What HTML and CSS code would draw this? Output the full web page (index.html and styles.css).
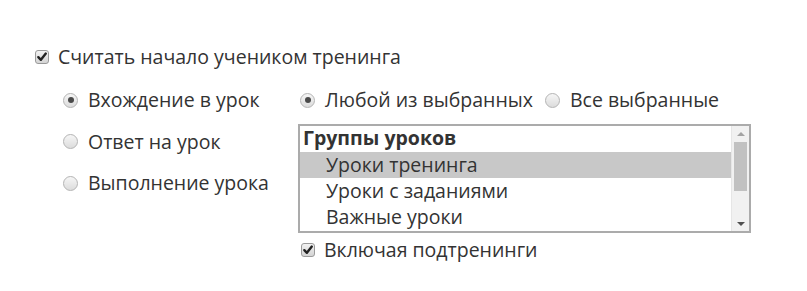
FILE: index.html
```html
<!DOCTYPE html>
<html lang="ru">
<head>
<meta charset="utf-8">
<link rel="stylesheet" href="styles.css">
</head>
<body>
<div class="form">
  <label class="line top-line">
    <span class="cb checked"><svg viewBox="0 0 14 14" width="14" height="14"><path d="M3.3 7.2 L5.9 9.8 L10.8 3.6" fill="none" stroke="#222" stroke-width="2.4" stroke-linecap="round" stroke-linejoin="round"/></svg></span>
    <span class="txt">Считать начало учеником тренинга</span>
  </label>
  <div class="sub">
    <div class="left-col">
      <label class="line"><span class="rb checked"></span><span class="txt">Вхождение в урок</span></label>
      <label class="line"><span class="rb"></span><span class="txt">Ответ на урок</span></label>
      <label class="line"><span class="rb"></span><span class="txt">Выполнение урока</span></label>
    </div>
    <div class="right-col">
      <div class="line mode-row">
        <label class="opt"><span class="rb checked"></span><span class="txt">Любой из выбранных</span></label>
        <label class="opt"><span class="rb"></span><span class="txt">Все выбранные</span></label>
      </div>
      <div class="listbox">
        <div class="items">
          <div class="group">Группы уроков</div>
          <div class="item selected">Уроки тренинга</div>
          <div class="item">Уроки с заданиями</div>
          <div class="item">Важные уроки</div>
        </div>
        <div class="scrollbar">
          <span class="arrow up"></span>
          <span class="thumb"></span>
          <span class="arrow down"></span>
        </div>
      </div>
      <label class="line sub-line">
        <span class="cb checked"><svg viewBox="0 0 14 14" width="14" height="14"><path d="M3.3 7.2 L5.9 9.8 L10.8 3.6" fill="none" stroke="#222" stroke-width="2.4" stroke-linecap="round" stroke-linejoin="round"/></svg></span>
        <span class="txt">Включая подтренинги</span>
      </label>
    </div>
  </div>
</div>
</body>
</html>
```
FILE: styles.css
```css
html, body {
  margin: 0;
  padding: 0;
  background: #fff;
}
body {
  font-family: "Open Sans", "Noto Sans", sans-serif;
  font-size: 19.5px;
  color: #333;
  width: 807px;
  height: 291px;
  overflow: hidden;
}
.form {
  padding: 45px 0 0 35px;
}
.line {
  display: flex;
  align-items: center;
  height: 24px;
  line-height: 24px;
}
.txt {
  white-space: nowrap;
}
.cb {
  width: 14px;
  height: 14px;
  box-sizing: border-box;
  border: 1px solid #9a9a9a;
  border-radius: 3px;
  background: linear-gradient(#f2f2f2, #d4d4d4);
  flex: none;
  margin-right: 9px;
  position: relative;
}
.cb svg {
  position: absolute;
  left: -1px;
  top: -1px;
}
.rb {
  width: 15px;
  height: 15px;
  box-sizing: border-box;
  border: 1px solid #b4b4b4;
  border-radius: 50%;
  background: linear-gradient(#f6f6f6, #dcdcdc);
  flex: none;
  margin-right: 10px;
  display: inline-flex;
  align-items: center;
  justify-content: center;
}
.rb.checked::after {
  content: "";
  width: 6px;
  height: 6px;
  border-radius: 50%;
  background: #4a4a4a;
}
.sub {
  display: flex;
  margin: 19px 0 0 28px;
}
.left-col {
  width: 235px;
  display: flex;
  flex-direction: column;
  gap: 17.5px;
}
.right-col {
  display: flex;
  flex-direction: column;
}
.mode-row {
  padding-left: 2px;
  gap: 12px;
}
.opt {
  display: flex;
  align-items: center;
}
.listbox {
  margin-top: 12px;
  width: 453px;
  height: 109px;
  box-sizing: border-box;
  border: 2px solid #ababab;
  display: flex;
  overflow: hidden;
}
.items {
  flex: 1;
  display: flex;
  flex-direction: column;
}
.group {
  height: 26px;
  line-height: 24px;
  padding-left: 3px;
  font-weight: bold;
  color: #333;
}
.item {
  height: 26px;
  line-height: 26px;
  padding-left: 26px;
}
.item.selected {
  background: #c8c8c8;
}
.scrollbar {
  width: 17px;
  background: #f1f1f1;
  border-left: 1px solid #e6e6e6;
  display: flex;
  flex-direction: column;
  align-items: center;
}
.arrow {
  width: 0;
  height: 0;
  border-left: 4px solid transparent;
  border-right: 4px solid transparent;
}
.arrow.up {
  border-bottom: 4px solid #a3a3a3;
  margin-top: 6px;
}
.arrow.down {
  border-top: 4px solid #505050;
  margin-bottom: 5px;
  margin-top: auto;
}
.thumb {
  width: 13px;
  height: 49px;
  background: #c1c1c1;
  margin-top: 6px;
}
.sub-line {
  margin-top: 5px;
  padding-left: 3px;
}
```
